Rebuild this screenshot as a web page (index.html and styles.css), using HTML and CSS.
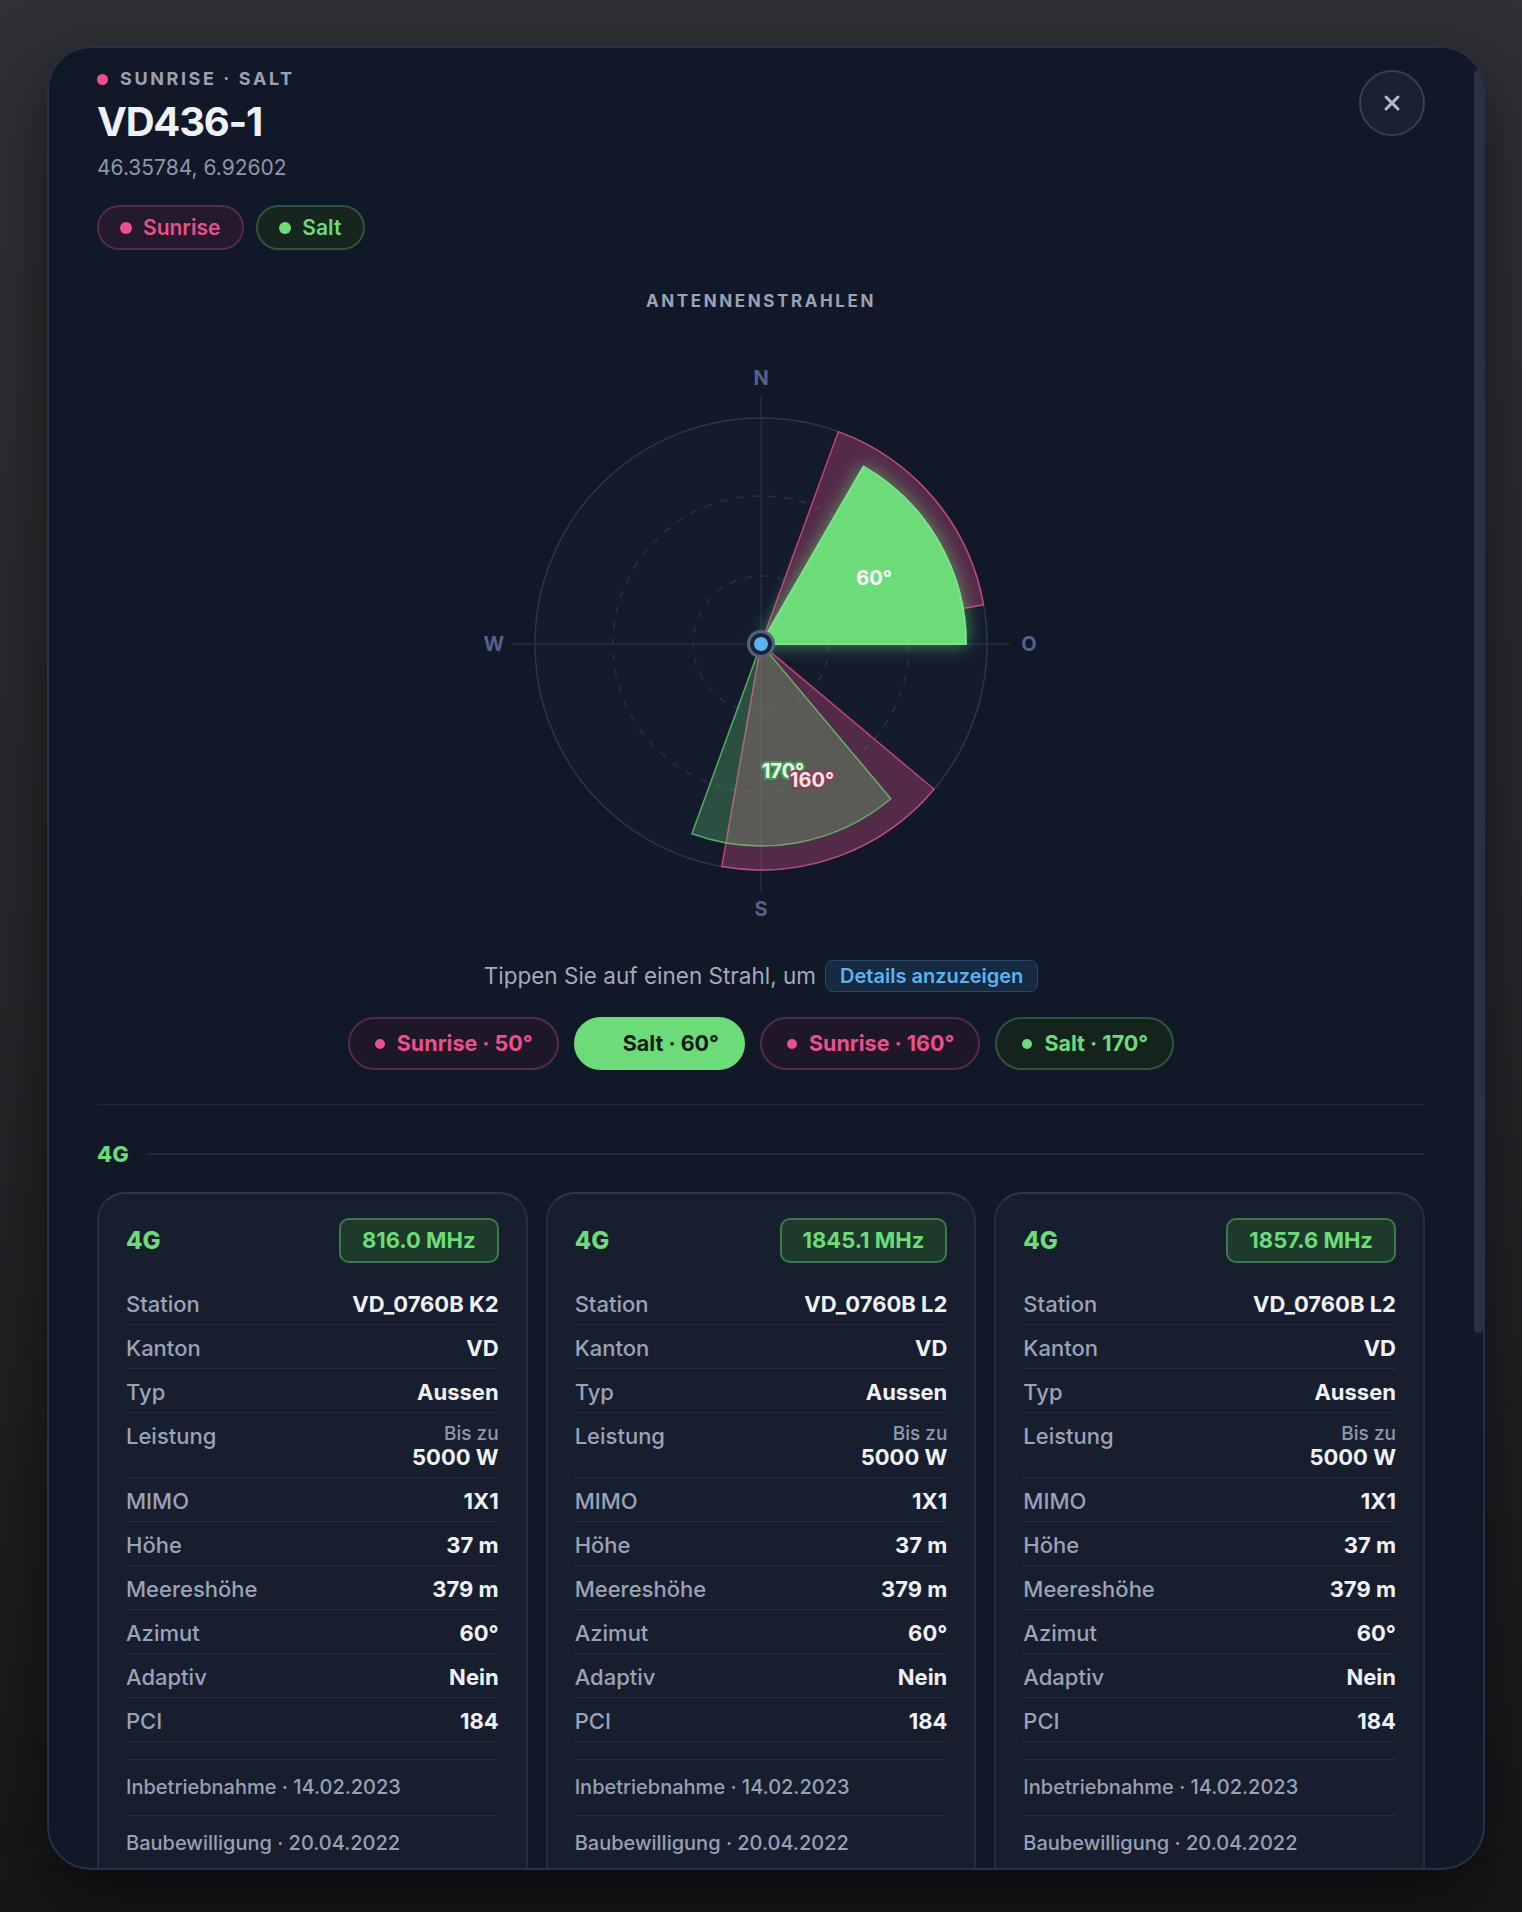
FILE: index.html
```html
<!DOCTYPE html>
<html lang="de">
<head>
    <meta charset="UTF-8">
    <meta name="viewport" content="width=device-width, initial-scale=1.0">
    <title>VD436-1 - Antennenstandort</title>
    <link rel="stylesheet" href="styles.css">
</head>
<body>
    <div class="modal">
        <button class="close-btn" aria-label="Schliessen">
            <svg width="18" height="18" viewBox="0 0 18 18"><path d="M3 3 L15 15 M15 3 L3 15" stroke="#b3bbcb" stroke-width="3" stroke-linecap="round"/></svg>
        </button>
        <div class="scroll-thumb"></div>

        <div class="modal-body">
            <header class="site-head">
                <div class="eyebrow"><span class="dot"></span>SUNRISE · SALT</div>
                <h1>VD436-1</h1>
                <div class="coords">46.35784, 6.92602</div>
                <div class="operators">
                    <span class="op-pill sunrise"><span class="dot"></span>Sunrise</span>
                    <span class="op-pill salt"><span class="dot"></span>Salt</span>
                </div>
            </header>

            <section class="beams">
                <h2 class="beams-title">ANTENNENSTRAHLEN</h2>

                <svg class="compass" width="580" height="580" viewBox="0 0 580 580">
                    <circle cx="290" cy="290" r="226" class="ring-outer"/>
                    <circle cx="290" cy="290" r="148" class="ring-dash"/>
                    <circle cx="290" cy="290" r="68" class="ring-dash"/>
                    <line x1="41" y1="290" x2="539" y2="290" class="axis"/>
                    <line x1="290" y1="41" x2="290" y2="539" class="axis"/>
                    <text x="290" y="24" class="cardinal">N</text>
                    <text x="290" y="555" class="cardinal">S</text>
                    <text x="23" y="290" class="cardinal">W</text>
                    <text x="558" y="290" class="cardinal">O</text>

                    <!-- unselected beams -->
                    <path d="M290 290 L367.3 77.6 A226 226 0 0 1 512.6 250.8 Z" class="beam sunrise"/>
                    <text x="380" y="185" class="beam-label sunrise">50°</text>
                    <path d="M290 290 L463.1 435.3 A226 226 0 0 1 250.8 512.6 Z" class="beam sunrise"/>
                    <path d="M290 290 L419.8 444.7 A202 202 0 0 1 220.9 479.8 Z" class="beam salt"/>
                    <text x="312" y="417" class="beam-label salt">170°</text>
                    <text x="341" y="426" class="beam-label sunrise">160°</text>

                    <!-- selected beam -->
                    <path d="M290 290 L392.5 112.5 A205 205 0 0 1 495 290 Z" class="beam salt active"/>
                    <text x="403" y="224" class="beam-label active">60°</text>

                    <circle cx="290" cy="290" r="12.5" class="hub"/>
                    <circle cx="290" cy="290" r="7" class="hub-dot"/>
                </svg>

                <p class="hint">Tippen Sie auf einen Strahl, um <span class="hint-badge">Details anzuzeigen</span></p>

                <div class="beam-chips">
                    <span class="chip sunrise"><span class="dot"></span>Sunrise · 50°</span>
                    <span class="chip salt active"><span class="dot"></span>Salt · 60°</span>
                    <span class="chip sunrise"><span class="dot"></span>Sunrise · 160°</span>
                    <span class="chip salt"><span class="dot"></span>Salt · 170°</span>
                </div>
            </section>

            <hr class="divider">

            <section class="tech">
                <div class="tech-head"><span>4G</span><span class="tech-line"></span></div>
                <div class="cards">
                    <article class="card">
                        <div class="card-head"><span class="card-tech">4G</span><span class="freq">816.0 MHz</span></div>
                        <dl class="rows">
                            <div class="row"><dt>Station</dt><dd>VD_0760B K2</dd></div>
                            <div class="row"><dt>Kanton</dt><dd>VD</dd></div>
                            <div class="row"><dt>Typ</dt><dd>Aussen</dd></div>
                            <div class="row"><dt>Leistung</dt><dd><span class="sub">Bis zu</span>5000 W</dd></div>
                            <div class="row"><dt>MIMO</dt><dd>1X1</dd></div>
                            <div class="row"><dt>Höhe</dt><dd>37 m</dd></div>
                            <div class="row"><dt>Meereshöhe</dt><dd>379 m</dd></div>
                            <div class="row"><dt>Azimut</dt><dd>60°</dd></div>
                            <div class="row"><dt>Adaptiv</dt><dd>Nein</dd></div>
                            <div class="row"><dt>PCI</dt><dd>184</dd></div>
                        </dl>
                        <div class="meta">
                            <div class="meta-item">Inbetriebnahme · 14.02.2023</div>
                            <div class="meta-item">Baubewilligung · 20.04.2022</div>
                        </div>
                    </article>
                    <article class="card">
                        <div class="card-head"><span class="card-tech">4G</span><span class="freq">1845.1 MHz</span></div>
                        <dl class="rows">
                            <div class="row"><dt>Station</dt><dd>VD_0760B L2</dd></div>
                            <div class="row"><dt>Kanton</dt><dd>VD</dd></div>
                            <div class="row"><dt>Typ</dt><dd>Aussen</dd></div>
                            <div class="row"><dt>Leistung</dt><dd><span class="sub">Bis zu</span>5000 W</dd></div>
                            <div class="row"><dt>MIMO</dt><dd>1X1</dd></div>
                            <div class="row"><dt>Höhe</dt><dd>37 m</dd></div>
                            <div class="row"><dt>Meereshöhe</dt><dd>379 m</dd></div>
                            <div class="row"><dt>Azimut</dt><dd>60°</dd></div>
                            <div class="row"><dt>Adaptiv</dt><dd>Nein</dd></div>
                            <div class="row"><dt>PCI</dt><dd>184</dd></div>
                        </dl>
                        <div class="meta">
                            <div class="meta-item">Inbetriebnahme · 14.02.2023</div>
                            <div class="meta-item">Baubewilligung · 20.04.2022</div>
                        </div>
                    </article>
                    <article class="card">
                        <div class="card-head"><span class="card-tech">4G</span><span class="freq">1857.6 MHz</span></div>
                        <dl class="rows">
                            <div class="row"><dt>Station</dt><dd>VD_0760B L2</dd></div>
                            <div class="row"><dt>Kanton</dt><dd>VD</dd></div>
                            <div class="row"><dt>Typ</dt><dd>Aussen</dd></div>
                            <div class="row"><dt>Leistung</dt><dd><span class="sub">Bis zu</span>5000 W</dd></div>
                            <div class="row"><dt>MIMO</dt><dd>1X1</dd></div>
                            <div class="row"><dt>Höhe</dt><dd>37 m</dd></div>
                            <div class="row"><dt>Meereshöhe</dt><dd>379 m</dd></div>
                            <div class="row"><dt>Azimut</dt><dd>60°</dd></div>
                            <div class="row"><dt>Adaptiv</dt><dd>Nein</dd></div>
                            <div class="row"><dt>PCI</dt><dd>184</dd></div>
                        </dl>
                        <div class="meta">
                            <div class="meta-item">Inbetriebnahme · 14.02.2023</div>
                            <div class="meta-item">Baubewilligung · 20.04.2022</div>
                        </div>
                    </article>
                </div>
            </section>

            <section class="tech">
                <div class="tech-head"><span>5G</span><span class="tech-line"></span></div>
                <div class="cards">
                    <article class="card">
                        <div class="card-head"><span class="card-tech">5G</span><span class="freq">3500.0 MHz</span></div>
                        <dl class="rows">
                            <div class="row"><dt>Station</dt><dd>VD_0760B N1</dd></div>
                            <div class="row"><dt>Kanton</dt><dd>VD</dd></div>
                            <div class="row"><dt>Typ</dt><dd>Aussen</dd></div>
                            <div class="row"><dt>MIMO</dt><dd>8X8</dd></div>
                            <div class="row"><dt>Höhe</dt><dd>37 m</dd></div>
                            <div class="row"><dt>Azimut</dt><dd>60°</dd></div>
                            <div class="row"><dt>Adaptiv</dt><dd>Ja</dd></div>
                        </dl>
                        <div class="meta">
                            <div class="meta-item">Inbetriebnahme · 14.02.2023</div>
                        </div>
                    </article>
                </div>
            </section>
        </div>
    </div>
</body>
</html>
```

FILE: styles.css
```css
body {
    margin: 0;
    height: 1912px;
    box-sizing: border-box;
    padding: 46px 37px 42px 47px;
    background: linear-gradient(180deg, #2f3135 0%, #26282b 50%, #161718 100%);
    font-family: "Inter", "Liberation Sans", sans-serif;
    color: #eef1f7;
}
.modal {
    position: relative;
    height: 100%;
    box-sizing: border-box;
    border: 2px solid #263047;
    border-radius: 44px;
    background: #111827;
    overflow: hidden;
    box-shadow: 0 24px 70px rgba(0,0,0,0.55);
}
.modal-body {
    height: 100%;
    box-sizing: border-box;
    overflow-y: auto;
    scrollbar-width: none;
    padding: 20px 58px 48px 48px;
}
/* drawn thumb, the native one is hidden */
.scroll-thumb {
    position: absolute;
    top: 22px;
    right: 0;
    width: 9px;
    height: 1263px;
    border-radius: 5px;
    background: #2a3142;
    z-index: 2;
}
.close-btn {
    position: absolute;
    top: 22px;
    right: 58px;
    width: 66px;
    height: 66px;
    border-radius: 50%;
    border: 2px solid #363f54;
    background: #1a2131;
    display: flex;
    align-items: center;
    justify-content: center;
    padding: 0;
    cursor: pointer;
    z-index: 2;
}

/* header */
.eyebrow {
    display: flex;
    align-items: center;
    gap: 12px;
    font-size: 18px;
    line-height: 22px;
    font-weight: 700;
    letter-spacing: 2.6px;
    color: #9aa3b5;
}
.eyebrow .dot {
    width: 11px;
    height: 11px;
    border-radius: 50%;
    background: #ec4f8c;
}
h1 {
    margin: 8px 0 0;
    font-size: 40px;
    line-height: 48px;
    font-weight: 700;
    letter-spacing: -1.2px;
    color: #eef1f8;
}
.coords {
    margin-top: 9px;
    font-size: 21px;
    line-height: 26px;
    color: #8e97a9;
}
.operators {
    display: flex;
    gap: 12px;
    margin-top: 24px;
}
.op-pill {
    display: inline-flex;
    align-items: center;
    gap: 11px;
    padding: 8px 22px 8px 21px;
    border: 2px solid;
    border-radius: 24px;
    font-size: 21px;
    line-height: 25px;
    font-weight: 600;
}
.op-pill .dot {
    width: 12px;
    height: 12px;
    border-radius: 50%;
    background: currentColor;
}
.sunrise.op-pill {
    color: #ec4f8c;
    background: #231a2e;
    border-color: #552a4b;
}
.salt.op-pill {
    color: #6bdc78;
    background: #16261f;
    border-color: #2d553a;
}

/* beams */
.beams {
    display: flex;
    flex-direction: column;
    align-items: center;
}
.beams-title {
    margin: 40px 0 0;
    font-size: 17px;
    line-height: 22px;
    font-weight: 700;
    letter-spacing: 2.6px;
    color: #9aa3b5;
}
.compass {
    display: block;
    margin-top: 42px;
    overflow: visible;
}
.ring-outer {
    fill: #131b2d;
    stroke: #2c3651;
    stroke-width: 1.5;
}
.ring-dash {
    fill: none;
    stroke: #26304a;
    stroke-width: 1.5;
    stroke-dasharray: 7 9;
}
.axis {
    stroke: #232d45;
    stroke-width: 1.5;
}
.cardinal {
    fill: #53628a;
    font-size: 20px;
    font-weight: 700;
    text-anchor: middle;
    dominant-baseline: central;
}
.beam.sunrise {
    fill: rgba(236,79,140,0.3);
    stroke: rgba(236,79,140,0.75);
    stroke-width: 1.5;
}
.beam.salt {
    fill: rgba(107,220,120,0.28);
    stroke: rgba(107,220,120,0.7);
    stroke-width: 1.5;
}
.beam.salt.active {
    fill: #6bdc78;
    stroke: #7be486;
    stroke-width: 2;
    filter: drop-shadow(0 0 9px rgba(107,220,120,0.6));
}
.beam-label {
    font-size: 20px;
    font-weight: 700;
    text-anchor: middle;
    dominant-baseline: central;
    paint-order: stroke;
    stroke-width: 4px;
    stroke-linejoin: round;
}
.beam-label.salt {
    fill: #effbe9;
    stroke: #3f9a52;
}
.beam-label.sunrise {
    fill: #f6e7df;
    stroke: #8a3a5c;
}
.beam-label.active {
    fill: #ffffff;
    stroke: #6bdc78;
}
.hub {
    fill: #1b2336;
    stroke: #55627f;
    stroke-width: 3;
}
.hub-dot {
    fill: #5ab4f0;
}
.hint {
    display: flex;
    align-items: center;
    gap: 9px;
    margin: 26px 0 0;
    font-size: 22.5px;
    line-height: 30px;
    color: #a2aabb;
}
.hint-badge {
    padding: 3px 14px;
    border: 1px solid #2a4866;
    border-radius: 8px;
    background: #162a42;
    color: #5ab4f0;
    font-size: 20px;
    line-height: 24px;
    font-weight: 600;
}
.beam-chips {
    display: flex;
    gap: 15px;
    margin-top: 25px;
}
.chip {
    display: inline-flex;
    align-items: center;
    gap: 12px;
    padding: 11px 24px 11px 25px;
    border: 2px solid;
    border-radius: 28px;
    font-size: 21.5px;
    line-height: 27px;
    font-weight: 700;
}
.chip .dot {
    width: 10px;
    height: 10px;
    border-radius: 50%;
    background: currentColor;
}
.chip.sunrise {
    color: #ec4f8c;
    background: #1e1727;
    border-color: #552a4b;
}
.chip.salt {
    color: #6bdc78;
    background: #15231d;
    border-color: #2d553a;
}
.chip.salt.active {
    color: #0f1b13;
    background: #6bdc78;
    border-color: #6bdc78;
}
.chip.salt.active .dot {
    background: #6bdc78;
}
.divider {
    margin: 34px 0 0;
    border: none;
    border-top: 1px solid #1e2638;
}

/* technology sections */
.tech-head {
    display: flex;
    align-items: center;
    gap: 18px;
    margin-top: 35px;
    font-size: 22px;
    line-height: 28px;
    font-weight: 800;
    color: #6bdc78;
}
.tech-line {
    flex: 1;
    height: 2px;
    background: #212a3d;
}
.cards {
    display: grid;
    grid-template-columns: repeat(3, 1fr);
    gap: 18px;
    margin-top: 24px;
}
.card {
    border: 2px solid #252e43;
    border-top-color: #2d374e;
    border-radius: 28px;
    background: #171e2d;
    padding: 24px 27px 22px;
}
.card-head {
    display: flex;
    align-items: center;
    justify-content: space-between;
}
.card-tech {
    font-size: 24px;
    font-weight: 800;
    color: #6bdc78;
}
.freq {
    padding: 7px 21px;
    border: 2px solid #3b7a4c;
    border-radius: 10px;
    background: #1d3a2a;
    color: #6bdc78;
    font-size: 22px;
    line-height: 27px;
    font-weight: 700;
}
.rows {
    margin: 18px 0 0;
}
.row {
    display: flex;
    justify-content: space-between;
    align-items: flex-start;
    padding: 10px 0 7px;
    border-bottom: 1px solid #252d3f;
    font-size: 22px;
    line-height: 26px;
}
.row dt {
    font-weight: 500;
    color: #9aa3b7;
}
.row dd {
    margin: 0;
    text-align: right;
    font-weight: 700;
    color: #eef1f7;
}
.row dd .sub {
    display: block;
    font-size: 19px;
    line-height: 21px;
    font-weight: 500;
    color: #8f98ab;
}
.meta {
    margin-top: 17px;
}
.meta-item {
    padding: 14px 0 15px;
    border-top: 1px solid #252d3f;
    font-size: 20px;
    line-height: 26px;
    font-weight: 500;
    color: #98a1b5;
}
```
